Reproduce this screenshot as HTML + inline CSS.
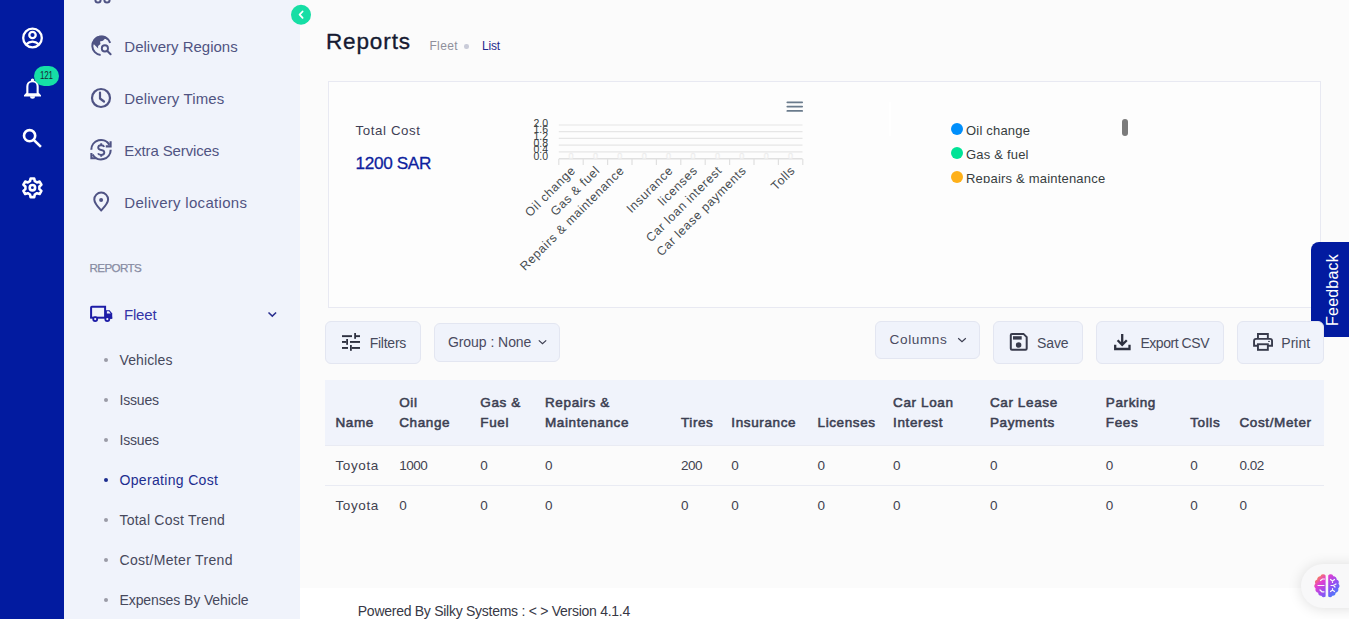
<!DOCTYPE html>
<html><head><meta charset="utf-8">
<style>
*{margin:0;padding:0;box-sizing:border-box}
html,body{width:1349px;height:619px;overflow:hidden;background:#ffffff;font-family:"Liberation Sans",sans-serif}
.a{position:absolute;line-height:1;white-space:nowrap}
.ab{position:absolute}
#rail{position:absolute;left:0;top:0;width:64px;height:619px;background:#021ba0}
#side{position:absolute;left:64px;top:0;width:236px;height:619px;background:#f0f3fb}
#main{position:absolute;left:300px;top:0;width:1049px;height:588px;background:#fbfbfb}
.dot{position:absolute;width:4px;height:4px;border-radius:50%;background:#a0a0a8}
.btn{position:absolute;background:#f0f3fb;border:1px solid #e3e6f1;border-radius:6px}
</style></head><body>
<div id="rail"></div>
<div id="side"></div>
<div id="main"></div>
<svg class="ab" style="left:0;top:0" width="64" height="220" viewBox="0 0 64 220">
<g fill="none" stroke="#ffffff" stroke-width="2.3">
<circle cx="32.5" cy="38" r="9.3"/>
<circle cx="32.5" cy="35" r="3.2"/>
<path d="M25.8 44.6 Q32.5 38.6 39.2 44.6"/>
</g>
<g fill="#ffffff">
<path d="M32.5 78.5 a1.6 1.6 0 0 1 1.6 1.6 v0.6 a6 6 0 0 1 4.6 5.8 v6.2 l2.3 2.6 v1.1 h-17 v-1.1 l2.3 -2.6 v-6.2 a6 6 0 0 1 4.6 -5.8 v-0.6 a1.6 1.6 0 0 1 1.6 -1.6z M28.4 93.2 h8.2 v-6.8 a4.1 4.1 0 0 0 -8.2 0z"/>
<path d="M30 96.3 h5 a2.5 2.5 0 0 1 -5 0z"/>
</g>
<g fill="none" stroke="#ffffff" stroke-width="2.6">
<circle cx="29.6" cy="135.7" r="5.6"/>
<path d="M33.8 139.9 L40 146" stroke-linecap="square"/>
</g>
<g fill="none" stroke="#ffffff" stroke-width="2.6" transform="translate(0.4 -0.3)">
<path d="M30.2 178.8 h3.6 l0.6 2.6 l2.2 1.3 l2.6 -0.8 l1.8 3.1 l-2 1.8 v2.6 l2 1.8 l-1.8 3.1 l-2.6 -0.8 l-2.2 1.3 l-0.6 2.6 h-3.6 l-0.6 -2.6 l-2.2 -1.3 l-2.6 0.8 l-1.8 -3.1 l2 -1.8 v-2.6 l-2 -1.8 l1.8 -3.1 l2.6 0.8 l2.2 -1.3z" stroke-linejoin="round"/>
<circle cx="32" cy="188" r="2.7"/>
</g>
</svg>
<div class="ab" style="left:34px;top:66px;width:25px;height:20px;border-radius:10px;background:#16dfa6"></div>
<div class="a" style="left:40.2px;top:70.6px;font-size:10px;color:#1c2b33;font-weight:400;letter-spacing:-0.2px;transform:scaleX(0.8);transform-origin:0 0;">121</div>
<svg class="ab" style="left:64px;top:0" width="236" height="619" viewBox="64 0 236 619">
<g fill="#4f5384">
<circle cx="98" cy="0" r="3.6"/><circle cx="107" cy="0" r="3.6"/>
</g>
<g fill="#f0f3fb"><circle cx="98" cy="0" r="1.6"/><circle cx="107" cy="0" r="1.6"/></g>
<!-- globe search -->
<g>
<path d="M110.2 42.8 A9.2 9.2 0 1 0 100.6 55" fill="none" stroke="#4f5384" stroke-width="2"/>
<path d="M92.3 44.2 A9.2 9.2 0 0 1 109.5 40.2 L106.4 39.2 L104.9 38.7 L103 40.7 L100 41.6 L100.5 44.1 L98.1 46 L98.1 48.4 L94.2 44.5 Z" fill="#4f5384"/>
<circle cx="104.9" cy="48.4" r="3.1" fill="none" stroke="#4f5384" stroke-width="1.9"/>
<path d="M107.6 51.2 L110.6 54.2" stroke="#4f5384" stroke-width="2" stroke-linecap="round"/>
</g>
<!-- clock -->
<g fill="none" stroke="#4f5384" stroke-width="2.2">
<circle cx="101" cy="98" r="9"/>
<path d="M100 92.5 v6 l4 3" stroke-linecap="round" stroke-linejoin="round"/>
</g>
<!-- extra services -->
<g fill="none" stroke="#4f5384" stroke-width="2.1">
<path d="M91.3 149.7 A9.7 9.7 0 0 1 109.4 144.85"/>
<path d="M110.6 141.3 L110.6 146.4 L105.8 146.4" stroke-linejoin="miter"/>
<path d="M110.7 149.7 A9.7 9.7 0 0 1 92.6 154.55"/>
<path d="M91.4 153 L91.4 158.2 L96.2 158.2" stroke-linejoin="miter"/>
</g>
<g fill="none" stroke="#4f5384" stroke-width="1.9">
<path d="M104.2 146.8 Q103.5 145.2 101.2 145.2 Q98.2 145.2 98.2 147.6 Q98.2 149.6 101.2 150 Q104.3 150.4 104.3 152.5 Q104.3 154.9 101.2 154.9 Q98.8 154.9 98 153.3"/>
<path d="M101.2 143.2 V145.2 M101.2 154.9 V156.8"/>
</g>
<!-- pin -->
<path d="M101.2 210.5 C97 206 94.3 203.2 94.3 199.5 A6.9 6.9 0 0 1 108.1 199.5 C108.1 203.2 105.4 206 101.2 210.5 Z" fill="none" stroke="#4f5384" stroke-width="2" stroke-linejoin="round"/>
<circle cx="101.1" cy="200" r="2" fill="#4f5384"/>
<!-- truck -->
<g fill="#1d1ca6">
<path fill="none" stroke="#1d1ca6" stroke-width="2" d="M91.1 317.7 V307.6 Q91.1 306.8 91.9 306.8 H105.1 V317"/>
<rect x="90.1" y="316.7" width="22.1" height="2"/>
<path d="M106 310.2 H109.6 L112.2 313.4 V318.7 H106 Z"/>
<path d="M106.9 311.3 H109 L110.7 313.6 H106.9 Z" fill="#f0f3fb"/>
<circle cx="95.2" cy="319.1" r="2.9"/>
<circle cx="107.3" cy="319.1" r="2.9"/>
<circle cx="95.2" cy="319.1" r="1.1" fill="#f0f3fb"/>
<circle cx="107.3" cy="319.1" r="1.1" fill="#f0f3fb"/>
</g>
<path d="M268.5 312.5 l3.8 3.6 l3.8 -3.6" fill="none" stroke="#2a2f8f" stroke-width="1.5"/>
</svg>
<div class="a" style="left:124.3px;top:38.5px;font-size:15px;color:#505482;font-weight:400;letter-spacing:0px;">Delivery Regions</div>
<div class="a" style="left:124.3px;top:90.5px;font-size:15px;color:#505482;font-weight:400;letter-spacing:0.12px;">Delivery Times</div>
<div class="a" style="left:124.3px;top:142.5px;font-size:15px;color:#505482;font-weight:400;letter-spacing:-0.13px;">Extra Services</div>
<div class="a" style="left:124.3px;top:194.5px;font-size:15px;color:#505482;font-weight:400;letter-spacing:0.3px;">Delivery locations</div>
<div class="a" style="left:89.5px;top:262.2px;font-size:11.6px;color:#878ba2;font-weight:400;letter-spacing:-0.6px;-webkit-text-stroke:0.25px #878ba2;">REPORTS</div>
<div class="a" style="left:124.0px;top:306.6px;font-size:15px;color:#3434a8;font-weight:400;letter-spacing:-0.2px;">Fleet</div>
<div class="dot" style="left:104px;top:357.5px;background:#9a9ba6"></div>
<div class="a" style="left:119.5px;top:352.6px;font-size:14px;color:#46485c;font-weight:400;letter-spacing:0.12px;">Vehicles</div>
<div class="dot" style="left:104px;top:397.5px;background:#9a9ba6"></div>
<div class="a" style="left:119.5px;top:392.6px;font-size:14px;color:#46485c;font-weight:400;letter-spacing:-0.2px;">Issues</div>
<div class="dot" style="left:104px;top:437.5px;background:#9a9ba6"></div>
<div class="a" style="left:119.5px;top:432.6px;font-size:14px;color:#46485c;font-weight:400;letter-spacing:-0.2px;">Issues</div>
<div class="dot" style="left:104px;top:477.5px;background:#1d2d8f"></div>
<div class="a" style="left:119.5px;top:472.6px;font-size:14px;color:#1d2d8f;font-weight:400;letter-spacing:0.33px;">Operating Cost</div>
<div class="dot" style="left:104px;top:517.5px;background:#9a9ba6"></div>
<div class="a" style="left:119.5px;top:512.6px;font-size:14px;color:#46485c;font-weight:400;letter-spacing:0.23px;">Total Cost Trend</div>
<div class="dot" style="left:104px;top:557.5px;background:#9a9ba6"></div>
<div class="a" style="left:119.5px;top:552.6px;font-size:14px;color:#46485c;font-weight:400;letter-spacing:0.32px;">Cost/Meter Trend</div>
<div class="dot" style="left:104px;top:597.5px;background:#9a9ba6"></div>
<div class="a" style="left:119.5px;top:592.6px;font-size:14px;color:#46485c;font-weight:400;letter-spacing:-0.1px;">Expenses By Vehicle</div>
<svg class="ab" style="left:290px;top:4px" width="22" height="22" viewBox="0 0 22 22">
<circle cx="11" cy="10.7" r="10" fill="#16dea5"/>
<path d="M12.6 7.5 l-3 3.2 l3 3.2" fill="none" stroke="#fff" stroke-width="1.8" stroke-linecap="round" stroke-linejoin="round"/>
</svg>
<div class="a" style="left:325.9px;top:30.8px;font-size:22.5px;color:#151a32;font-weight:400;letter-spacing:0.9px;-webkit-text-stroke:0.35px #151a32;">Reports</div>
<div class="a" style="left:429.4px;top:39.6px;font-size:12px;color:#8f909c;font-weight:400;letter-spacing:0.4px;">Fleet</div>
<div class="dot" style="left:464px;top:44px;width:4.5px;height:4.5px;background:#c9cbd8"></div>
<div class="a" style="left:482.0px;top:39.6px;font-size:12px;color:#1e2a8c;font-weight:400;letter-spacing:-0.2px;">List</div>
<div class="ab" style="left:328px;top:81px;width:993px;height:227px;border:1px solid #e8e9f2;background:#fdfdfd"></div>
<div class="a" style="left:355.5px;top:123.7px;font-size:13.3px;color:#3f3f55;font-weight:400;letter-spacing:0.6px;">Total Cost</div>
<div class="a" style="left:355.5px;top:155.4px;font-size:17.2px;color:#0d1f9e;font-weight:400;letter-spacing:-0.35px;-webkit-text-stroke:0.3px #0d1f9e;">1200 SAR</div>
<svg class="ab" style="left:500px;top:90px" width="330" height="200" viewBox="500 90 330 200">
<line x1="558.8" x2="802.5" y1="125" y2="125" stroke="#e6e6e6" stroke-width="1.2"/>
<line x1="558.8" x2="802.5" y1="131.6" y2="131.6" stroke="#e6e6e6" stroke-width="1.2"/>
<line x1="558.8" x2="802.5" y1="138.3" y2="138.3" stroke="#e6e6e6" stroke-width="1.2"/>
<line x1="558.8" x2="802.5" y1="145.1" y2="145.1" stroke="#e6e6e6" stroke-width="1.2"/>
<line x1="558.8" x2="802.5" y1="151.8" y2="151.8" stroke="#e6e6e6" stroke-width="1.2"/>
<line x1="558.8" x2="802.5" y1="158.8" y2="158.8" stroke="#e0e0e0" stroke-width="1.6"/>
<line x1="558.8" x2="558.8" y1="159" y2="165" stroke="#e0e0e0" stroke-width="1.2"/>
<line x1="583.2" x2="583.2" y1="159" y2="165" stroke="#e0e0e0" stroke-width="1.2"/>
<line x1="607.6" x2="607.6" y1="159" y2="165" stroke="#e0e0e0" stroke-width="1.2"/>
<line x1="632.0" x2="632.0" y1="159" y2="165" stroke="#e0e0e0" stroke-width="1.2"/>
<line x1="656.4" x2="656.4" y1="159" y2="165" stroke="#e0e0e0" stroke-width="1.2"/>
<line x1="680.8" x2="680.8" y1="159" y2="165" stroke="#e0e0e0" stroke-width="1.2"/>
<line x1="705.2" x2="705.2" y1="159" y2="165" stroke="#e0e0e0" stroke-width="1.2"/>
<line x1="729.6" x2="729.6" y1="159" y2="165" stroke="#e0e0e0" stroke-width="1.2"/>
<line x1="754.0" x2="754.0" y1="159" y2="165" stroke="#e0e0e0" stroke-width="1.2"/>
<line x1="778.4" x2="778.4" y1="159" y2="165" stroke="#e0e0e0" stroke-width="1.2"/>
<line x1="802.8" x2="802.8" y1="159" y2="165" stroke="#e0e0e0" stroke-width="1.2"/>
<text x="571.0" y="159" font-family="Liberation Sans" font-size="9" fill="#ffffff" stroke="#e8e8e8" stroke-width="0.4" text-anchor="middle">0</text>
<text x="595.4" y="159" font-family="Liberation Sans" font-size="9" fill="#ffffff" stroke="#e8e8e8" stroke-width="0.4" text-anchor="middle">0</text>
<text x="619.8" y="159" font-family="Liberation Sans" font-size="9" fill="#ffffff" stroke="#e8e8e8" stroke-width="0.4" text-anchor="middle">0</text>
<text x="644.2" y="159" font-family="Liberation Sans" font-size="9" fill="#ffffff" stroke="#e8e8e8" stroke-width="0.4" text-anchor="middle">0</text>
<text x="668.6" y="159" font-family="Liberation Sans" font-size="9" fill="#ffffff" stroke="#e8e8e8" stroke-width="0.4" text-anchor="middle">0</text>
<text x="693.0" y="159" font-family="Liberation Sans" font-size="9" fill="#ffffff" stroke="#e8e8e8" stroke-width="0.4" text-anchor="middle">0</text>
<text x="717.4" y="159" font-family="Liberation Sans" font-size="9" fill="#ffffff" stroke="#e8e8e8" stroke-width="0.4" text-anchor="middle">0</text>
<text x="741.8" y="159" font-family="Liberation Sans" font-size="9" fill="#ffffff" stroke="#e8e8e8" stroke-width="0.4" text-anchor="middle">0</text>
<text x="766.2" y="159" font-family="Liberation Sans" font-size="9" fill="#ffffff" stroke="#e8e8e8" stroke-width="0.4" text-anchor="middle">0</text>
<text x="790.6" y="159" font-family="Liberation Sans" font-size="9" fill="#ffffff" stroke="#e8e8e8" stroke-width="0.4" text-anchor="middle">0</text>
<text x="548" y="126.8" font-family="Liberation Sans" font-size="10.5" fill="#373d3f" text-anchor="end">2.0</text>
<text x="548" y="133.4" font-family="Liberation Sans" font-size="10.5" fill="#373d3f" text-anchor="end">1.6</text>
<text x="548" y="140.1" font-family="Liberation Sans" font-size="10.5" fill="#373d3f" text-anchor="end">1.2</text>
<text x="548" y="146.7" font-family="Liberation Sans" font-size="10.5" fill="#373d3f" text-anchor="end">0.8</text>
<text x="548" y="153.4" font-family="Liberation Sans" font-size="10.5" fill="#373d3f" text-anchor="end">0.4</text>
<text x="548" y="160.0" font-family="Liberation Sans" font-size="10.5" fill="#373d3f" text-anchor="end">0.0</text>
<text x="570.0" y="165" transform="rotate(-45 570.0 165)" font-family="Liberation Sans" font-size="12.3" fill="#464c50" text-anchor="end" dominant-baseline="hanging" letter-spacing="0.65">Oil change</text>
<text x="594.4" y="165" transform="rotate(-45 594.4 165)" font-family="Liberation Sans" font-size="12.3" fill="#464c50" text-anchor="end" dominant-baseline="hanging" letter-spacing="0.65">Gas &amp; fuel</text>
<text x="618.8" y="165" transform="rotate(-45 618.8 165)" font-family="Liberation Sans" font-size="12.3" fill="#464c50" text-anchor="end" dominant-baseline="hanging" letter-spacing="0.65">Repairs &amp; maintenance</text>
<text x="667.6" y="165" transform="rotate(-45 667.6 165)" font-family="Liberation Sans" font-size="12.3" fill="#464c50" text-anchor="end" dominant-baseline="hanging" letter-spacing="0.65">Insurance</text>
<text x="692.0" y="165" transform="rotate(-45 692.0 165)" font-family="Liberation Sans" font-size="12.3" fill="#464c50" text-anchor="end" dominant-baseline="hanging" letter-spacing="0.65">licenses</text>
<text x="716.4" y="165" transform="rotate(-45 716.4 165)" font-family="Liberation Sans" font-size="12.3" fill="#464c50" text-anchor="end" dominant-baseline="hanging" letter-spacing="0.65">Car loan interest</text>
<text x="740.8" y="165" transform="rotate(-45 740.8 165)" font-family="Liberation Sans" font-size="12.3" fill="#464c50" text-anchor="end" dominant-baseline="hanging" letter-spacing="0.65">Car lease payments</text>
<text x="789.6" y="165" transform="rotate(-45 789.6 165)" font-family="Liberation Sans" font-size="12.3" fill="#464c50" text-anchor="end" dominant-baseline="hanging" letter-spacing="0.65">Tolls</text>
<line x1="787.3" x2="802.2" y1="102.3" y2="102.3" stroke="#6a7b8c" stroke-width="1.7" stroke-linecap="round"/>
<line x1="787.3" x2="802.2" y1="106.6" y2="106.6" stroke="#6a7b8c" stroke-width="1.7" stroke-linecap="round"/>
<line x1="787.3" x2="802.2" y1="110.9" y2="110.9" stroke="#6a7b8c" stroke-width="1.7" stroke-linecap="round"/>
</svg>
<div class="ab" style="left:889px;top:102px;width:2px;height:34px;background:#ffffff"></div>
<div class="ab" style="left:945px;top:115px;width:190px;height:68px;overflow:hidden">
<div class="ab" style="left:6px;top:8.2px;width:12px;height:12px;border-radius:50%;background:#008ffb"></div>
<div class="a" style="left:21.0px;top:9.0px;font-size:13px;color:#373d3f;font-weight:400;letter-spacing:0.2px;">Oil change</div>
<div class="ab" style="left:6px;top:32.2px;width:12px;height:12px;border-radius:50%;background:#00e396"></div>
<div class="a" style="left:21.0px;top:33.0px;font-size:13px;color:#373d3f;font-weight:400;letter-spacing:0.2px;">Gas &amp; fuel</div>
<div class="ab" style="left:6px;top:56.2px;width:12px;height:12px;border-radius:50%;background:#feb019"></div>
<div class="a" style="left:21.0px;top:57.0px;font-size:13px;color:#373d3f;font-weight:400;letter-spacing:0.2px;">Repairs &amp; maintenance</div>
</div>
<div class="ab" style="left:1122px;top:119px;width:6px;height:17px;border-radius:3px;background:#7b7b7b"></div>
<div class="ab" style="left:1311px;top:242px;width:38px;height:95px;background:#021ba0;border-top-left-radius:8px"></div>
<div class="a" style="left:1293px;top:281px;width:80px;height:18px;line-height:18px;font-size:16px;color:#fff;transform:rotate(-90deg);text-align:center;letter-spacing:0.2px">Feedback</div>
<div class="btn" style="left:325px;top:321px;width:96px;height:43px"></div>
<div class="btn" style="left:434px;top:323px;width:126px;height:38.5px"></div>
<div class="btn" style="left:875px;top:321px;width:105px;height:37.5px"></div>
<div class="btn" style="left:993px;top:321px;width:90px;height:43px"></div>
<div class="btn" style="left:1096px;top:321px;width:128px;height:43px"></div>
<div class="btn" style="left:1237px;top:321px;width:87px;height:43px;z-index:3"></div>
<svg class="ab" style="left:330px;top:320px;z-index:4" width="1000" height="50" viewBox="330 320 1000 50">
<g fill="#2e3140">
<rect x="342" y="335.2" width="10" height="1.9"/><rect x="354.2" y="333" width="1.8" height="5.8"/><rect x="356" y="335.2" width="4" height="1.9"/>
<rect x="342" y="341" width="4.2" height="1.9"/><rect x="346.2" y="339" width="1.8" height="5.8"/><rect x="350" y="341" width="10" height="1.9"/>
<rect x="342" y="347" width="6" height="1.9"/><rect x="350" y="345" width="1.8" height="5.8"/><rect x="351.8" y="347" width="8.2" height="1.9"/>
</g>
<path d="M538.8 340.4 l3.7 3.3 l3.7 -3.3" fill="none" stroke="#3b3d50" stroke-width="1.2"/>
<path d="M958.2 338.3 l3.8 3.4 l3.8 -3.4" fill="none" stroke="#3b3d50" stroke-width="1.2"/>
<g>
<path d="M1012 333.9 h11.5 l3.2 3.2 v11.4 a1.2 1.2 0 0 1 -1.2 1.2 h-13.5 a1.2 1.2 0 0 1 -1.2 -1.2 v-13.4 a1.2 1.2 0 0 1 1.2 -1.2z" fill="none" stroke="#383b4c" stroke-width="2"/>
<rect x="1013" y="336.2" width="8.7" height="3.4" fill="#383b4c"/>
<circle cx="1018.6" cy="345" r="2.8" fill="#383b4c"/>
</g>
<g fill="none" stroke="#2e3140" stroke-width="2.3">
<path d="M1122.2 334 v10.5 M1117.6 340.2 l4.6 4.6 l4.6 -4.6"/>
<path d="M1115.2 344.7 v4.3 h14.3 v-4.3"/>
</g>
<g fill="none" stroke="#383b4c" stroke-width="1.9">
<path d="M1257.95 338.4 V334.05 H1267.85 V338.4"/>
<path d="M1257.95 345.75 H1254.05 V340.9 a2 2 0 0 1 2 -2 H1270.05 a2 2 0 0 1 2 2 V345.75 H1267.85"/>
<rect x="1257.95" y="344.25" width="9.9" height="5.6"/>
</g>
<rect x="1268.1" y="340.9" width="1.8" height="1" fill="#383b4c"/>
</svg>
<div class="a" style="left:369.7px;top:335.5px;font-size:14px;color:#474a5c;font-weight:400;letter-spacing:-0.25px;">Filters</div>
<div class="a" style="left:447.9px;top:334.8px;font-size:14px;color:#4a4a60;font-weight:400;letter-spacing:-0.05px;">Group : None</div>
<div class="a" style="left:889.6px;top:332.5px;font-size:13.6px;color:#4a4a60;font-weight:400;letter-spacing:0.6px;">Columns</div>
<div class="a" style="left:1037.0px;top:335.5px;font-size:14px;color:#474a5c;font-weight:400;letter-spacing:-0.1px;">Save</div>
<div class="a" style="left:1140.4px;top:335.5px;font-size:14px;color:#474a5c;font-weight:400;letter-spacing:-0.45px;">Export CSV</div>
<div class="a" style="left:1281.3px;top:335.5px;font-size:14px;color:#474a5c;z-index:5">Print</div>
<div class="ab" style="left:325px;top:380px;width:999px;height:65.5px;background:#f0f3fb"></div>
<div class="ab" style="left:325px;top:445px;width:999px;height:1px;background:#e9ebf3"></div>
<div class="ab" style="left:325px;top:485px;width:999px;height:1px;background:#e9ebf3"></div>
<div class="a" style="left:335.5px;top:416.2px;font-size:13.5px;color:#3c3f52;font-weight:400;letter-spacing:0.62px;-webkit-text-stroke:0.55px #3c3f52;">Name</div>
<div class="a" style="left:399.2px;top:396.2px;font-size:13.5px;color:#3c3f52;font-weight:400;letter-spacing:0.62px;-webkit-text-stroke:0.55px #3c3f52;">Oil</div>
<div class="a" style="left:399.2px;top:416.2px;font-size:13.5px;color:#3c3f52;font-weight:400;letter-spacing:0.62px;-webkit-text-stroke:0.55px #3c3f52;">Change</div>
<div class="a" style="left:480.3px;top:396.2px;font-size:13.5px;color:#3c3f52;font-weight:400;letter-spacing:0.62px;-webkit-text-stroke:0.55px #3c3f52;">Gas &amp;</div>
<div class="a" style="left:480.3px;top:416.2px;font-size:13.5px;color:#3c3f52;font-weight:400;letter-spacing:0.62px;-webkit-text-stroke:0.55px #3c3f52;">Fuel</div>
<div class="a" style="left:545.0px;top:396.2px;font-size:13.5px;color:#3c3f52;font-weight:400;letter-spacing:0.62px;-webkit-text-stroke:0.55px #3c3f52;">Repairs &amp;</div>
<div class="a" style="left:545.0px;top:416.2px;font-size:13.5px;color:#3c3f52;font-weight:400;letter-spacing:0.62px;-webkit-text-stroke:0.55px #3c3f52;">Maintenance</div>
<div class="a" style="left:680.9px;top:416.2px;font-size:13.5px;color:#3c3f52;font-weight:400;letter-spacing:0.62px;-webkit-text-stroke:0.55px #3c3f52;">Tires</div>
<div class="a" style="left:731.3px;top:416.2px;font-size:13.5px;color:#3c3f52;font-weight:400;letter-spacing:0.62px;-webkit-text-stroke:0.55px #3c3f52;">Insurance</div>
<div class="a" style="left:817.5px;top:416.2px;font-size:13.5px;color:#3c3f52;font-weight:400;letter-spacing:0.62px;-webkit-text-stroke:0.55px #3c3f52;">Licenses</div>
<div class="a" style="left:893.1px;top:396.2px;font-size:13.5px;color:#3c3f52;font-weight:400;letter-spacing:0.62px;-webkit-text-stroke:0.55px #3c3f52;">Car Loan</div>
<div class="a" style="left:893.1px;top:416.2px;font-size:13.5px;color:#3c3f52;font-weight:400;letter-spacing:0.62px;-webkit-text-stroke:0.55px #3c3f52;">Interest</div>
<div class="a" style="left:989.9px;top:396.2px;font-size:13.5px;color:#3c3f52;font-weight:400;letter-spacing:0.62px;-webkit-text-stroke:0.55px #3c3f52;">Car Lease</div>
<div class="a" style="left:989.9px;top:416.2px;font-size:13.5px;color:#3c3f52;font-weight:400;letter-spacing:0.62px;-webkit-text-stroke:0.55px #3c3f52;">Payments</div>
<div class="a" style="left:1105.8px;top:396.2px;font-size:13.5px;color:#3c3f52;font-weight:400;letter-spacing:0.62px;-webkit-text-stroke:0.55px #3c3f52;">Parking</div>
<div class="a" style="left:1105.8px;top:416.2px;font-size:13.5px;color:#3c3f52;font-weight:400;letter-spacing:0.62px;-webkit-text-stroke:0.55px #3c3f52;">Fees</div>
<div class="a" style="left:1190.2px;top:416.2px;font-size:13.5px;color:#3c3f52;font-weight:400;letter-spacing:0.62px;-webkit-text-stroke:0.55px #3c3f52;">Tolls</div>
<div class="a" style="left:1239.5px;top:416.2px;font-size:13.5px;color:#3c3f52;font-weight:400;letter-spacing:0.62px;-webkit-text-stroke:0.55px #3c3f52;">Cost/Meter</div>
<div class="a" style="left:335.5px;top:459.3px;font-size:13.5px;color:#41424f;font-weight:400;letter-spacing:0.6px;">Toyota</div>
<div class="a" style="left:335.5px;top:499.4px;font-size:13.5px;color:#41424f;font-weight:400;letter-spacing:0.6px;">Toyota</div>
<div class="a" style="left:399.2px;top:459.3px;font-size:13.5px;color:#41424f;font-weight:400;letter-spacing:-0.5px;">1000</div>
<div class="a" style="left:399.2px;top:499.4px;font-size:13.5px;color:#41424f;font-weight:400;letter-spacing:-0.5px;">0</div>
<div class="a" style="left:480.3px;top:459.3px;font-size:13.5px;color:#41424f;font-weight:400;letter-spacing:-0.5px;">0</div>
<div class="a" style="left:480.3px;top:499.4px;font-size:13.5px;color:#41424f;font-weight:400;letter-spacing:-0.5px;">0</div>
<div class="a" style="left:545.0px;top:459.3px;font-size:13.5px;color:#41424f;font-weight:400;letter-spacing:-0.5px;">0</div>
<div class="a" style="left:545.0px;top:499.4px;font-size:13.5px;color:#41424f;font-weight:400;letter-spacing:-0.5px;">0</div>
<div class="a" style="left:680.9px;top:459.3px;font-size:13.5px;color:#41424f;font-weight:400;letter-spacing:-0.5px;">200</div>
<div class="a" style="left:680.9px;top:499.4px;font-size:13.5px;color:#41424f;font-weight:400;letter-spacing:-0.5px;">0</div>
<div class="a" style="left:731.3px;top:459.3px;font-size:13.5px;color:#41424f;font-weight:400;letter-spacing:-0.5px;">0</div>
<div class="a" style="left:731.3px;top:499.4px;font-size:13.5px;color:#41424f;font-weight:400;letter-spacing:-0.5px;">0</div>
<div class="a" style="left:817.5px;top:459.3px;font-size:13.5px;color:#41424f;font-weight:400;letter-spacing:-0.5px;">0</div>
<div class="a" style="left:817.5px;top:499.4px;font-size:13.5px;color:#41424f;font-weight:400;letter-spacing:-0.5px;">0</div>
<div class="a" style="left:893.1px;top:459.3px;font-size:13.5px;color:#41424f;font-weight:400;letter-spacing:-0.5px;">0</div>
<div class="a" style="left:893.1px;top:499.4px;font-size:13.5px;color:#41424f;font-weight:400;letter-spacing:-0.5px;">0</div>
<div class="a" style="left:989.9px;top:459.3px;font-size:13.5px;color:#41424f;font-weight:400;letter-spacing:-0.5px;">0</div>
<div class="a" style="left:989.9px;top:499.4px;font-size:13.5px;color:#41424f;font-weight:400;letter-spacing:-0.5px;">0</div>
<div class="a" style="left:1105.8px;top:459.3px;font-size:13.5px;color:#41424f;font-weight:400;letter-spacing:-0.5px;">0</div>
<div class="a" style="left:1105.8px;top:499.4px;font-size:13.5px;color:#41424f;font-weight:400;letter-spacing:-0.5px;">0</div>
<div class="a" style="left:1190.2px;top:459.3px;font-size:13.5px;color:#41424f;font-weight:400;letter-spacing:-0.5px;">0</div>
<div class="a" style="left:1190.2px;top:499.4px;font-size:13.5px;color:#41424f;font-weight:400;letter-spacing:-0.5px;">0</div>
<div class="a" style="left:1239.5px;top:459.3px;font-size:13.5px;color:#41424f;font-weight:400;letter-spacing:-0.5px;">0.02</div>
<div class="a" style="left:1239.5px;top:499.4px;font-size:13.5px;color:#41424f;font-weight:400;letter-spacing:-0.5px;">0</div>
<div class="a" style="left:357.8px;top:603.7px;font-size:14px;color:#373845;font-weight:400;letter-spacing:-0.27px;">Powered By Silky Systems : &lt; &gt; Version 4.1.4</div>
<div class="ab" style="left:1301px;top:564px;width:70px;height:44px;border-radius:22px;background:#f8f8f9;box-shadow:0 1px 14px rgba(0,0,0,0.13)"></div>
<svg class="ab" style="left:1313px;top:573px" width="28" height="26" viewBox="0 0 28 26">
<defs><linearGradient id="bg" x1="0" y1="0" x2="1" y2="1">
<stop offset="0.05" stop-color="#ff9a2a"/><stop offset="0.3" stop-color="#e43ed0"/><stop offset="0.6" stop-color="#9150f2"/><stop offset="1" stop-color="#2c8cff"/></linearGradient></defs>
<path fill="url(#bg)" d="M12.6 2.5 a3 3 0 0 0 -5.2 0.8 a3 3 0 0 0 -3.2 3.3 a3.2 3.2 0 0 0 -1.9 4.2 a3.2 3.2 0 0 0 0.3 4.6 a3.2 3.2 0 0 0 2.6 4.3 a3 3 0 0 0 3.2 3 a3 3 0 0 0 4.2 0.8z M15.2 2.5 a3 3 0 0 1 5.2 0.8 a3 3 0 0 1 3.2 3.3 a3.2 3.2 0 0 1 1.9 4.2 a3.2 3.2 0 0 1 -0.3 4.6 a3.2 3.2 0 0 1 -2.6 4.3 a3 3 0 0 1 -3.2 3 a3 3 0 0 1 -4.2 0.8z"/>
<g fill="none" stroke="#f8f8f9" stroke-width="1.2" stroke-linecap="round">
<path d="M5 12.5 h6"/><path d="M7.5 7.5 l2 -1.5 h2"/><path d="M7 17 l2 1.8 h2"/>
<path d="M17.5 6.5 l2 1.5 l2 -1.5 M19.5 8 v1.5"/><path d="M18 12.5 l2.5 0 l2.5 -1.5 M20.5 12.5 l1.5 1.5"/><path d="M17.5 18.5 l2 -1.5 l2 1.5 M19.5 17 v-1.5"/>
</g>
</svg>
</body></html>
